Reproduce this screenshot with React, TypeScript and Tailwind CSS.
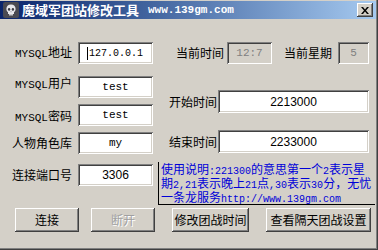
import React from "react";

const cjk = { fontFamily: '"Noto Sans CJK SC", sans-serif' };
const mono = { fontFamily: '"Liberation Mono", "Noto Sans CJK SC", monospace' };
const sans = { fontFamily: '"Liberation Sans", "Noto Sans CJK SC", sans-serif' };

const sunken =
  "shadow-[inset_1px_1px_#808080,inset_-1px_-1px_#ffffff,inset_2px_2px_#404040,inset_-2px_-2px_#d4d0c8]";
const raised =
  "shadow-[inset_-1px_-1px_#404040,inset_1px_1px_#ffffff,inset_-2px_-2px_#808080,inset_2px_2px_#d4d0c8]";

const Skull = () => (
  <svg width="16" height="16" viewBox="0 0 16 16">
    <rect x="0" y="0" width="16" height="16" rx="2" fill="#4a4a52" />
    <path d="M8 2.5c-3 0-4.6 2-4.6 4.4 0 1.6.8 2.6 1.6 3.2V12h6v-1.9c.8-.6 1.6-1.6 1.6-3.2C12.6 4.5 11 2.5 8 2.5z" fill="#e8e8ec" />
    <ellipse cx="6.1" cy="7.4" rx="1.2" ry="1.4" fill="#3c3c44" />
    <ellipse cx="9.9" cy="7.4" rx="1.2" ry="1.4" fill="#3c3c44" />
    <path d="M7.5 9.4h1l-.5 1z" fill="#3c3c44" />
    <path d="M6 12v1.5h4V12" fill="#c8c8cc" />
  </svg>
);

const Label = ({ children, className = "" }: any) => (
  <span className={`text-[12px] leading-[14px] text-black whitespace-nowrap ${className}`} style={cjk}>
    {children}
  </span>
);

const Field = ({ children, className = "", disabled = false, font = mono, size = "text-[11px]" }: any) => (
  <div
    className={`h-[22px] flex items-center justify-center ${size} ${sunken} ${
      disabled ? "bg-[#d4d0c8] text-[#808080]" : "bg-white text-black"
    } ${className}`}
    style={font}
  >
    {children}
  </div>
);

const Btn = ({ children, className = "", disabled = false }: any) => (
  <div
    className={`h-[24px] flex items-center justify-center bg-[#d4d0c8] text-[12px] ${raised} ${
      disabled ? "text-[#a0a0a0] [text-shadow:1px_1px_#ffffff]" : "text-black"
    } ${className}`}
    style={cjk}
  >
    {children}
  </div>
);

const LeftRow = ({ label, children, className = "" }: any) => (
  <div className={`flex items-center ${className}`}>
    <div className="w-[72px] flex justify-end">{label}</div>
    <div className="ml-[6px]">{children}</div>
  </div>
);

const M = ({ children }: any) => (
  <span className="text-[10px] leading-[14px]" style={mono}>
    {children}
  </span>
);

export default function App() {
  return (
    <div className="w-[378px] h-[250px] bg-[#d4d0c8] relative overflow-hidden pt-px shadow-[inset_-1px_-1px_#404040,inset_-2px_-2px_#808080]">
      {/* Title bar */}
      <div className="h-[18px] mr-[2px] flex items-center bg-gradient-to-r from-[#0a246a] to-[#a6caf0]">
        <div className="ml-[3px]">
          <Skull />
        </div>
        <span className="ml-[3px] text-white font-bold text-[13px] leading-[16px]" style={cjk}>
          魔域军团站修改工具
        </span>
        <span className="ml-[9px] text-white font-bold text-[11px] leading-[16px]" style={mono}>
          www.139gm.com
        </span>
        <div className={`ml-auto mr-[3px] w-[16px] h-[14px] bg-[#d4d0c8] flex items-center justify-center ${raised}`}>
          <svg width="8" height="7" viewBox="0 0 8 7">
            <path d="M0 0h2l2 2.5L6 0h2L5 3.5 8 7H6L4 4.5 2 7H0l3-3.5z" fill="#000" />
          </svg>
        </div>
      </div>

      {/* Body */}
      <div className="flex items-start pt-[23px]">
        {/* Left column */}
        <div className="w-[156px] flex flex-col">
          <LeftRow
            label={
              <Label>
                <span className="text-[11px]" style={mono}>MYSQL</span>地址
              </Label>
            }
          >
            <Field className="w-[75px] !justify-start pl-[9px]" size="text-[10px]">
              <span className="w-px h-[13px] bg-black mr-[1px]" />
              127.0.0.1
            </Field>
          </LeftRow>
          <LeftRow
            className="mt-[12px]"
            label={
              <Label className="-mt-[6px]">
                <span className="text-[11px]" style={mono}>MYSQL</span>用户
              </Label>
            }
          >
            <Field className="w-[75px]">test</Field>
          </LeftRow>
          <LeftRow
            className="mt-[6px]"
            label={
              <Label className="mt-[4px]">
                <span className="text-[11px]" style={mono}>MYSQL</span>密码
              </Label>
            }
          >
            <Field className="w-[75px]">test</Field>
          </LeftRow>
          <LeftRow className="mt-[6px]" label={<Label>人物角色库</Label>}>
            <Field className="w-[75px]">my</Field>
          </LeftRow>
          <LeftRow className="mt-[10px]" label={<Label>连接端口号</Label>}>
            <Field className="w-[75px]" font={sans} size="text-[12px]">
              3306
            </Field>
          </LeftRow>
        </div>

        {/* Right column */}
        <div className="flex-1 flex flex-col">
          <div className="flex items-center">
            <Label className="ml-[20px]">当前时间</Label>
            <Field disabled className="ml-[3px] w-[45px]">
              12:7
            </Field>
            <Label className="ml-[12px]">当前星期</Label>
            <Field disabled className="ml-[6px] w-[31px]">
              5
            </Field>
          </div>
          <div className="flex items-center mt-[26px]">
            <Label className="ml-[13px]">开始时间</Label>
            <Field className="ml-[1px] w-[151px] !h-[23px]" font={sans} size="text-[12px]">
              2213000
            </Field>
          </div>
          <div className="flex items-center mt-[17px]">
            <Label className="ml-[13px]">结束时间</Label>
            <Field className="ml-[1px] w-[151px] !h-[23px]" font={sans} size="text-[12px]">
              2233000
            </Field>
          </div>
          <div
            className="mt-[9px] ml-[2px] w-[217px] h-[43px] border-l border-b border-black pl-[2px] text-[12px] text-[#0000d8] whitespace-nowrap"
            style={cjk}
          >
            <div className="h-[14px] leading-[14px]">
              使用说明<M>:221300</M>的意思第一个<M>2</M>表示星
            </div>
            <div className="h-[14px] leading-[14px]">
              期<M>2,21</M>表示晚上<M>21</M>点<M>,30</M>表示<M>30</M>分，无忧
            </div>
            <div className="h-[14px] leading-[14px]">
              一条龙服务<M>http://www.139gm.com</M>
            </div>
          </div>
        </div>
      </div>

      {/* Buttons */}
      <div className="flex mt-[3px]">
        <Btn className="ml-[15px] w-[64px]">连接</Btn>
        <Btn disabled className="ml-[12px] w-[64px]">
          断开
        </Btn>
        <Btn className="ml-[17px] w-[77px]">修改团战时间</Btn>
        <Btn className="ml-[17px] w-[105px]">查看隔天团战设置</Btn>
      </div>
    </div>
  );
}
